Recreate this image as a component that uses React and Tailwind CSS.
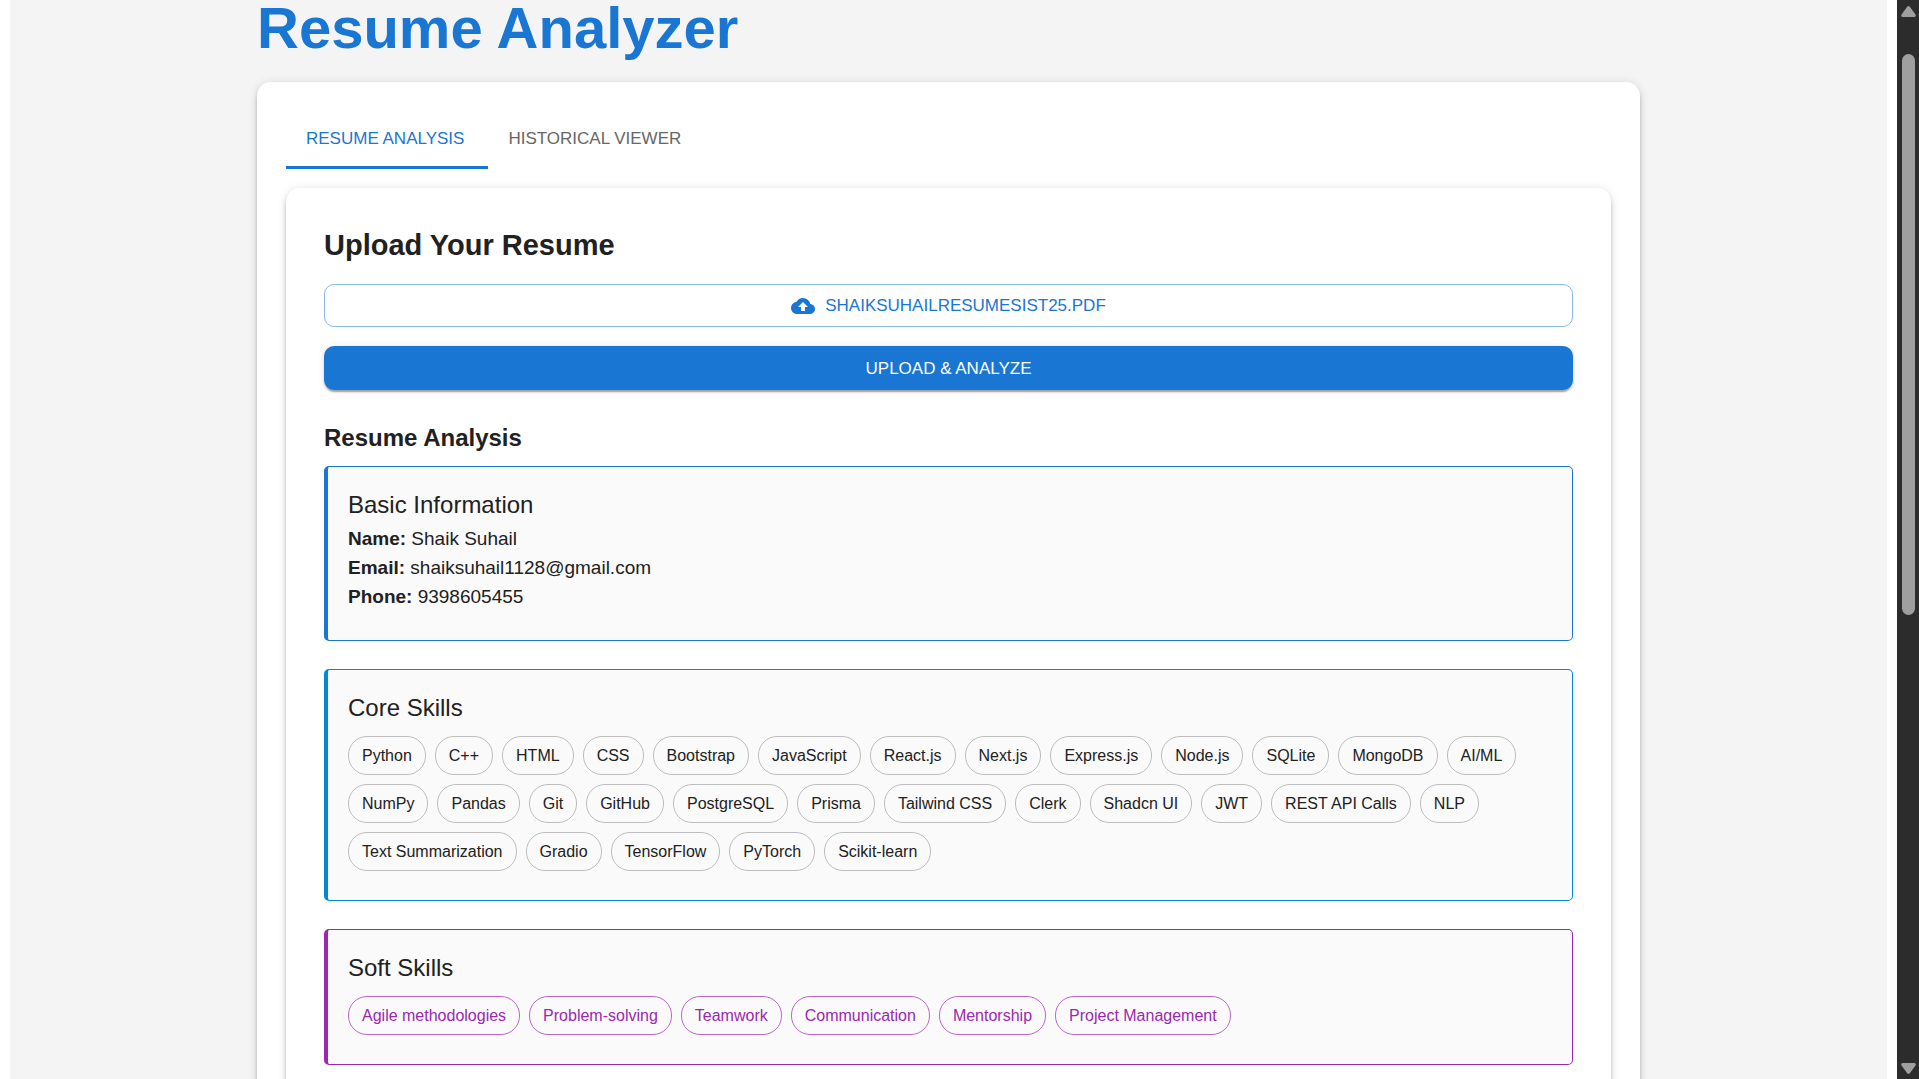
import { MdCloudUpload } from "react-icons/md";

const coreSkills = [
  "Python", "C++", "HTML", "CSS", "Bootstrap", "JavaScript", "React.js", "Next.js",
  "Express.js", "Node.js", "SQLite", "MongoDB", "AI/ML", "NumPy", "Pandas", "Git",
  "GitHub", "PostgreSQL", "Prisma", "Tailwind CSS", "Clerk", "Shadcn UI", "JWT",
  "REST API Calls", "NLP", "Text Summarization", "Gradio", "TensorFlow", "PyTorch",
  "Scikit-learn",
];

const softSkills = [
  "Agile methodologies", "Problem-solving", "Teamwork", "Communication",
  "Mentorship", "Project Management",
];

const contact = [
  ["Name:", "Shaik Suhail"],
  ["Email:", "shaiksuhail1128@gmail.com"],
  ["Phone:", "9398605455"],
];

function Section({ title, border, children }) {
  return (
    <section className={`mb-7 rounded-[5px] border border-l-4 bg-[#fafafa] px-5 pt-[19px] pb-[29px] ${border}`}>
      <h4 className="text-2xl leading-[38px]">{title}</h4>
      {children}
    </section>
  );
}

function Chips({ items, tone }) {
  return (
    <ul className="mt-[9px] flex flex-wrap gap-[9px]">
      {items.map((item) => (
        <li key={item} className={`flex h-[39px] items-center rounded-[19px] border px-[13px] text-base ${tone}`}>
          {item}
        </li>
      ))}
    </ul>
  );
}

function Scrollbar() {
  return (
    <div aria-hidden="true" className="flex w-[22px] shrink-0 flex-col items-center justify-between bg-[#2c2c2c] pt-[6px] pb-[5px]">
      <svg width="15" height="11" viewBox="0 0 15 11" fill="#9f9f9f">
        <path d="M6 1Q7.500-.8 9 1L14.500 8.500Q15.500 11 13 11H2Q-.5 11 .5 8.500Z" />
      </svg>
      <div className="flex w-[13px] grow flex-col pt-[37px]">
        <div className="h-5/9 rounded-full bg-[#9f9f9f]" />
      </div>
      <svg width="15" height="11" viewBox="0 0 15 11" fill="#9f9f9f">
        <path d="M6 10Q7.500 11.800 9 10L14.500 2.500Q15.500 0 13 0H2Q-.5 0 .5 2.500Z" />
      </svg>
    </div>
  );
}

export default function App() {
  return (
    <div className="flex h-screen overflow-hidden bg-white font-['Liberation_Sans',Arial,sans-serif] text-[#212121]">
      <div className="min-w-0 grow overflow-hidden px-[10px]">
        <div className="min-h-screen bg-[#f4f4f4]">
          <main className="mx-auto max-w-[1383px]">
            <h1 className="-mt-[5px] mb-[21px] text-[58px] leading-[66px] font-bold text-[#1976d2]">Resume Analyzer</h1>

            <div className="rounded-[14px] bg-white p-[29px] shadow-[0_4px_4px_-2px_rgba(0,0,0,0.2),0_4px_5px_0_rgba(0,0,0,0.14),0_1px_10px_0_rgba(0,0,0,0.12)]">
              <div role="tablist" className="flex text-[17px]">
                <button role="tab" aria-selected="true" className="h-[58px] border-b-3 border-[#1976d2] pr-6 pl-5 text-[#1976d2]">
                  RESUME ANALYSIS
                </button>
                <button role="tab" aria-selected="false" className="h-[58px] border-b-3 border-transparent pr-6 pl-5 text-[#666666]">
                  HISTORICAL VIEWER
                </button>
              </div>

              <div className="mt-[19px] rounded-[14px] bg-white p-[38px] shadow-[0_4px_4px_-2px_rgba(0,0,0,0.2),0_4px_5px_0_rgba(0,0,0,0.14),0_1px_10px_0_rgba(0,0,0,0.12)]">
                <h2 className="mb-5 text-[29px] leading-[38px] font-bold">Upload Your Resume</h2>

                <label className="flex h-[43px] cursor-pointer items-center justify-center gap-[10px] rounded-[10px] border border-[#8cbae8] text-[17px] text-[#1976d2]">
                  <MdCloudUpload size={24} aria-hidden="true" />
                  SHAIKSUHAILRESUMESIST25.PDF
                  <input type="file" className="sr-only" />
                </label>

                <button className="mt-[19px] h-11 w-full rounded-[10px] bg-[#1976d2] pt-0.5 text-[17px] text-white shadow-[0_4px_1px_-2px_rgba(0,0,0,0.2),0_2px_2px_0_rgba(0,0,0,0.14),0_1px_6px_0_rgba(0,0,0,0.12)]">
                  UPLOAD &amp; ANALYZE
                </button>

                <h3 className="mt-[29px] mb-[9px] text-2xl leading-[38px] font-bold">Resume Analysis</h3>

                <Section title="Basic Information" border="border-[#1976d2]">
                  {contact.map(([label, value]) => (
                    <p key={label} className="text-[19px] leading-[29px]">
                      <strong>{label}</strong> {value}
                    </p>
                  ))}
                </Section>

                <Section title="Core Skills" border="border-[#0288d1]">
                  <Chips items={coreSkills} tone="border-[#bdbdbd]" />
                </Section>

                <Section title="Soft Skills" border="border-[#9c27b0]">
                  <Chips items={softSkills} tone="border-[#b968c8] text-[#9c27b0]" />
                </Section>
              </div>
            </div>
          </main>
        </div>
      </div>
      <Scrollbar />
    </div>
  );
}
